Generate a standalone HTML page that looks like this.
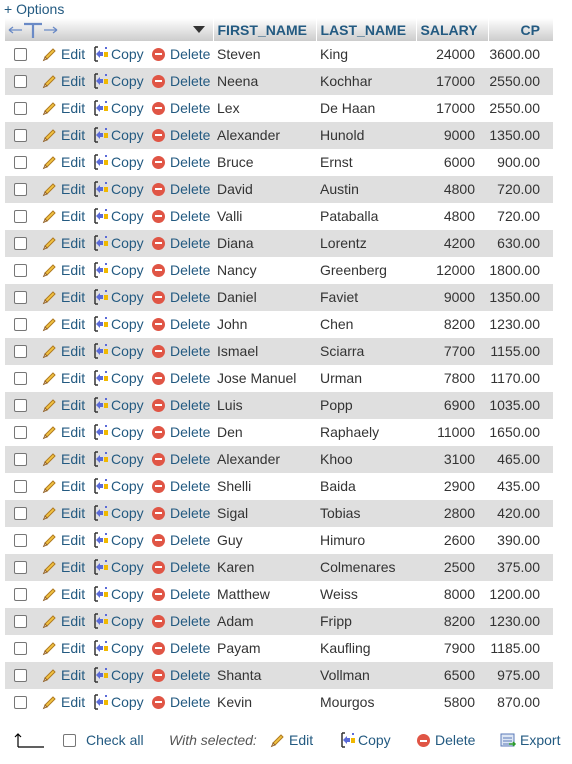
<!DOCTYPE html>
<html><head><meta charset="utf-8"><style>
body{margin:0;background:#fff;font-family:"Liberation Sans",sans-serif;font-size:14px;color:#333;width:572px;height:764px;overflow:hidden;position:relative}
a{color:#235a81;text-decoration:none}
.opt{position:absolute;left:4px;top:1px;color:#235a81}
table{position:absolute;left:5px;top:18px;border-collapse:collapse;table-layout:fixed;width:548px}
td,th{padding:0;height:25px;padding-bottom:2px;white-space:nowrap;overflow:hidden}
th{height:23px;padding-bottom:0;background:linear-gradient(#fff,#ccc);color:#235a81;font-weight:bold;text-align:left;border-left:1px solid #fff;padding-left:4px}
tr.e td{background:#dfdfdf}
.r{text-align:right;padding-right:13px}
.cb{display:inline-block;width:11px;height:11px;border:1px solid #767676;border-radius:2px;background:#fff;vertical-align:middle;margin-left:9px}
.ic{display:inline-block;vertical-align:-3px;margin-right:3px}
.del{display:inline-block;width:13px;height:13px;border-radius:50%;background:#e05545;vertical-align:-2px;position:relative;margin-right:5px}
.del:after{content:"";position:absolute;left:3px;top:5.5px;width:7px;height:2px;background:#fff}
.foot{position:absolute;top:732px;font-size:14px}
.hd{position:absolute;z-index:2}
</style></head><body>
<div class="opt">+ Options</div>
<table>
<colgroup><col style="width:33px"><col style="width:52px"><col style="width:59px"><col style="width:64px"><col style="width:103px"><col style="width:100px"><col style="width:72px"><col style="width:65px"></colgroup>
<tr><th colspan="4" style="border-left:0"></th><th>FIRST_NAME</th><th>LAST_NAME</th><th>SALARY</th><th class="r" style="text-align:right;padding-right:13px">CP</th></tr>
<tbody id="tb"></tbody>
</table>
<svg class="hd" style="left:8px;top:22px" width="50" height="16"><path d="M1 8H14M1 8l4-3M1 8l4 3M36 8H49M49 8l-4-3M49 8l-4 3" stroke="#6a8ac6" stroke-width="1.3" fill="none"/><path d="M16 2H34M25 2V16" stroke="#6a8ac6" stroke-width="2.2"/></svg>
<svg class="hd" style="left:193px;top:26px" width="12" height="8"><path d="M0 0H12L6 7Z" fill="#333"/></svg>
<script>
var d=[["Steven","King",24000,"3600.00"],["Neena","Kochhar",17000,"2550.00"],["Lex","De Haan",17000,"2550.00"],["Alexander","Hunold",9000,"1350.00"],["Bruce","Ernst",6000,"900.00"],["David","Austin",4800,"720.00"],["Valli","Pataballa",4800,"720.00"],["Diana","Lorentz",4200,"630.00"],["Nancy","Greenberg",12000,"1800.00"],["Daniel","Faviet",9000,"1350.00"],["John","Chen",8200,"1230.00"],["Ismael","Sciarra",7700,"1155.00"],["Jose Manuel","Urman",7800,"1170.00"],["Luis","Popp",6900,"1035.00"],["Den","Raphaely",11000,"1650.00"],["Alexander","Khoo",3100,"465.00"],["Shelli","Baida",2900,"435.00"],["Sigal","Tobias",2800,"420.00"],["Guy","Himuro",2600,"390.00"],["Karen","Colmenares",2500,"375.00"],["Matthew","Weiss",8000,"1200.00"],["Adam","Fripp",8200,"1230.00"],["Payam","Kaufling",7900,"1185.00"],["Shanta","Vollman",6500,"975.00"],["Kevin","Mourgos",5800,"870.00"]];
var pen='<svg class="ic" width="16" height="16" viewBox="0 0 16 16"><path d="M3 11L11 3l2 2-8 8z" fill="#f2c443" stroke="#b07a20" stroke-width="1"/><path d="M3 11l-1.5 3.5L5 13z" fill="#e8c9a0" stroke="#8a5a20" stroke-width=".8"/></svg>';
var cp='<svg class="ic" style="margin-right:2px" width="16" height="16" viewBox="0 0 16 16"><path d="M2 1h3M2 15h3M2 1v14" stroke="#333" stroke-width="1.5" fill="none"/><path d="M3 8l4-4v2h3v4H7v2z" fill="#5a6ad8"/><rect x="11" y="6" width="4" height="5" fill="#f0b800"/><rect x="12" y="1" width="2" height="2" fill="#5a6ad8"/></svg>';
var h='';
d.forEach(function(r,i){h+='<tr'+(i%2?' class="e"':'')+'><td><span class="cb"></span></td><td style="padding-left:4px">'+pen+'<a>Edit</a></td><td style="padding-left:3px">'+cp+'<a>Copy</a></td><td style="padding-left:3px"><span class="del"></span><a>Delete</a></td><td style="padding-left:4px">'+r[0]+'</td><td style="padding-left:4px">'+r[1]+'</td><td class="r" style="padding-right:13px">'+r[2]+'</td><td class="r">'+r[3]+'</td></tr>';});
document.getElementById('tb').innerHTML=h;
</script>
<svg style="position:absolute;left:14px;top:732px" width="32" height="16"><path d="M4 15V2M1 5l3-3 3 3M4 15H30" stroke="#000" stroke-width="1.2" fill="none"/></svg>
<span class="cb" style="position:absolute;left:63px;top:734px;margin:0"></span>
<a class="foot" style="left:86px">Check all</a>
<span class="foot" style="left:169px;font-style:italic;color:#555">With selected:</span>
<div class="foot" style="left:270px" id="f1"></div>
<div class="foot" style="left:340px" id="f2"></div>
<script>
document.getElementById('f1').innerHTML=pen+'<a>Edit</a>';
document.getElementById('f2').innerHTML=cp.replace('margin-right:2px','margin-right:2px')+'<a>Copy</a>';
</script>
<div class="foot" style="left:417px"><span class="del"></span><a>Delete</a></div>
<div class="foot" style="left:500px"><svg class="ic" width="17" height="15" viewBox="0 0 17 15"><rect x="1" y="1" width="13" height="12" fill="#dde6f4" stroke="#5a7ab8"/><path d="M3 5h9M3 8h9M3 11h6" stroke="#5a7ab8"/><path d="M9 11h6M13 9l2 2-2 2" stroke="#2a9a2a" stroke-width="1.5" fill="none"/></svg><a>Export</a></div>
</body></html>
